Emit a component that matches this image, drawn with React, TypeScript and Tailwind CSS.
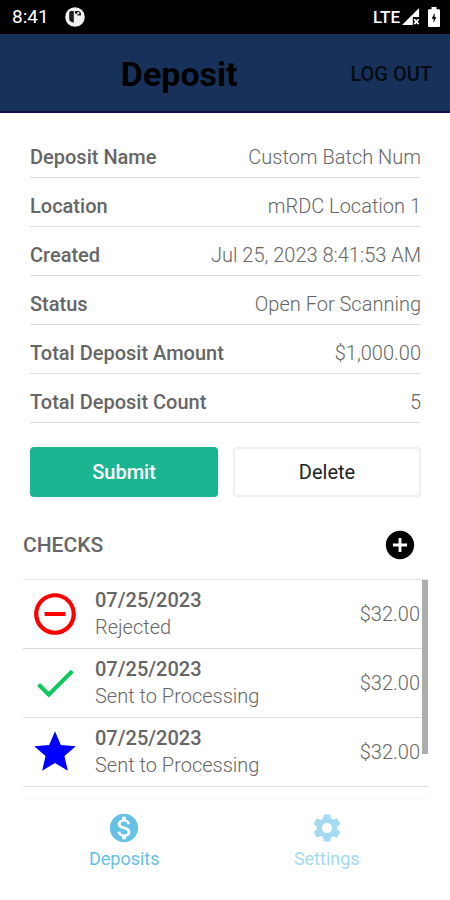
import React, { useState } from 'react';
import {
  MdAddCircle,
  MdCheck,
  MdMonetizationOn,
  MdRemoveCircleOutline,
  MdSettings,
  MdStar,
} from 'react-icons/md';

type CheckState = 'rejected' | 'sent' | 'starred';

interface CheckItem {
  id: number;
  date: string;
  status: string;
  amount: string;
  state: CheckState;
}

const details = [
  { label: 'Location', value: 'mRDC Location 1' },
  { label: 'Created', value: 'Jul 25, 2023 8:41:53 AM' },
  { label: 'Status', value: 'Open For Scanning' },
  { label: 'Total Deposit Amount', value: '$1,000.00' },
  { label: 'Total Deposit Count', value: '5' },
];

const checks: CheckItem[] = [
  { id: 1, date: '07/25/2023', status: 'Rejected', amount: '$32.00', state: 'rejected' },
  { id: 2, date: '07/25/2023', status: 'Sent to Processing', amount: '$32.00', state: 'sent' },
  { id: 3, date: '07/25/2023', status: 'Sent to Processing', amount: '$32.00', state: 'starred' },
];

const StatusBar: React.FC = () => (
  <div className="flex h-[34px] items-center justify-between bg-black pl-3 pr-[10px] text-white">
    <div className="flex items-center gap-4">
      <span className="text-[19px]">8:41</span>
      <svg className="h-5 w-5" viewBox="0 0 20 20" aria-hidden="true">
        <circle cx="10" cy="10" r="9.8" fill="#f2f2f2" />
        <path d="M4.200 6q0-2 2-2h2.600v11.500H7.500q-3.300-1.200-3.300-4z" fill="#1c1c1c" />
        <path d="M10 4h3.500q2.500.4 2.500 2.800v1.800h-3.500V6.800H10z" fill="#1c1c1c" />
        <circle cx="13.300" cy="6.200" r="1.100" fill="#f2f2f2" />
      </svg>
    </div>
    <div className="flex items-center">
      <span className="text-[17px] font-medium leading-6">LTE</span>
      <svg className="ml-0.5 h-[18px] w-[18px]" viewBox="0 0 20 20" aria-hidden="true">
        <path d="M19 0v10h-7v9H0z" fill="#fff" />
        <path d="M13.500 12.500l5 5.500M18.500 12.500l-5 5.500" stroke="#fff" strokeWidth="2" />
      </svg>
      <svg className="ml-2 h-5 w-3" viewBox="0 0 12 20" aria-hidden="true">
        <path d="M3.500 0h5v2.200H11q1 0 1 1V19q0 1-1 1H1q-1 0-1-1V3.200q0-1 1-1h2.500z" fill="#fff" />
        <path d="M6.600 6L3.600 11.800h2L5.400 16l3-6H6.600z" fill="#000" />
      </svg>
    </div>
  </div>
);

const CheckIcon: React.FC<{ state: CheckState }> = ({ state }) => {
  if (state === 'rejected') return <MdRemoveCircleOutline size={50} color="#ff0000" />;
  if (state === 'sent') return <MdCheck size={50} color="#0cc95c" />;
  return <MdStar size={50} color="#0000ff" />;
};

const App: React.FC = () => {
  const [name, setName] = useState('Custom Batch Num');

  return (
    <div className="flex min-h-screen flex-col bg-white font-['Roboto',sans-serif] text-xl leading-6 text-[#666]">
      <StatusBar />

      <header className="flex h-[79px] items-center border-b-2 border-[#100f48] bg-[#18315a] pl-6 pr-[18px] pt-[2px]">
        <h1 className="flex-1 text-center text-[34px] font-bold leading-10 text-black">Deposit</h1>
        <button type="button" className="pl-4 text-xl font-medium text-[#050b12]">LOG OUT</button>
      </header>

      <main className="flex-1">
        <section className="pl-[30px] pr-[29px] pt-4">
          <div className="flex justify-between gap-4 border-b border-[#dedede] pb-2 pt-4">
            <label htmlFor="deposit-name" className="shrink-0 font-medium">Deposit Name</label>
            <input
              id="deposit-name"
              value={name}
              onChange={(e) => setName(e.target.value)}
              className="h-6 w-full min-w-0 bg-transparent text-right font-light outline-none"
            />
          </div>
          <dl>
            {details.map((item) => (
              <div key={item.label} className="flex justify-between border-b border-[#dedede] pb-2 pt-4">
                <dt className="font-medium">{item.label}</dt>
                <dd className="font-light">{item.value}</dd>
              </div>
            ))}
          </dl>

          <div className="mt-6 grid grid-cols-2 gap-[15px]">
            <button type="button" className="h-[50px] rounded bg-[#1ab591] font-medium text-white shadow-xs">
              Submit
            </button>
            <button type="button" className="h-[50px] rounded border-2 border-[#f0f0f0] text-[#222]">
              Delete
            </button>
          </div>
        </section>

        <section className="pl-[23px] pr-[22px]">
          <div className="flex h-[82px] items-center justify-between pr-[11px] pt-[14px]">
            <h2 className="text-[21px] font-medium">CHECKS</h2>
            <button type="button" aria-label="Add check" className="text-black">
              <MdAddCircle size={34} />
            </button>
          </div>

          <div className="relative border-t border-[#e4e4e4]">
            <ul>
              {checks.map((check) => (
                <li key={check.id} className="flex h-[69px] items-center border-b border-[#dcdcdc] pr-2">
                  <span className="mr-2 flex w-16 shrink-0 justify-center">
                    <CheckIcon state={check.state} />
                  </span>
                  <div className="flex-1 leading-[27px]">
                    <p className="font-medium">{check.date}</p>
                    <p className="font-light">{check.status}</p>
                  </div>
                  <span className="font-light">{check.amount}</span>
                </li>
              ))}
            </ul>
            {/* scroll thumb over the list */}
            <div className="absolute right-0 top-0 h-[174px] w-[6px] bg-[#adadad]" />
          </div>
        </section>
      </main>

      <nav className="ml-[23px] mr-[22px] grid h-[102px] grid-cols-2 border-t border-[#f8f8f8] pt-3">
        <a href="#deposits" className="flex flex-col items-center text-[#66c1e8]">
          <MdMonetizationOn size={34} />
          <span className="text-lg leading-7">Deposits</span>
        </a>
        <a href="#settings" className="flex flex-col items-center text-[#a3d9f1]">
          <MdSettings size={34} />
          <span className="text-lg leading-7">Settings</span>
        </a>
      </nav>
    </div>
  );
};

export default App;
